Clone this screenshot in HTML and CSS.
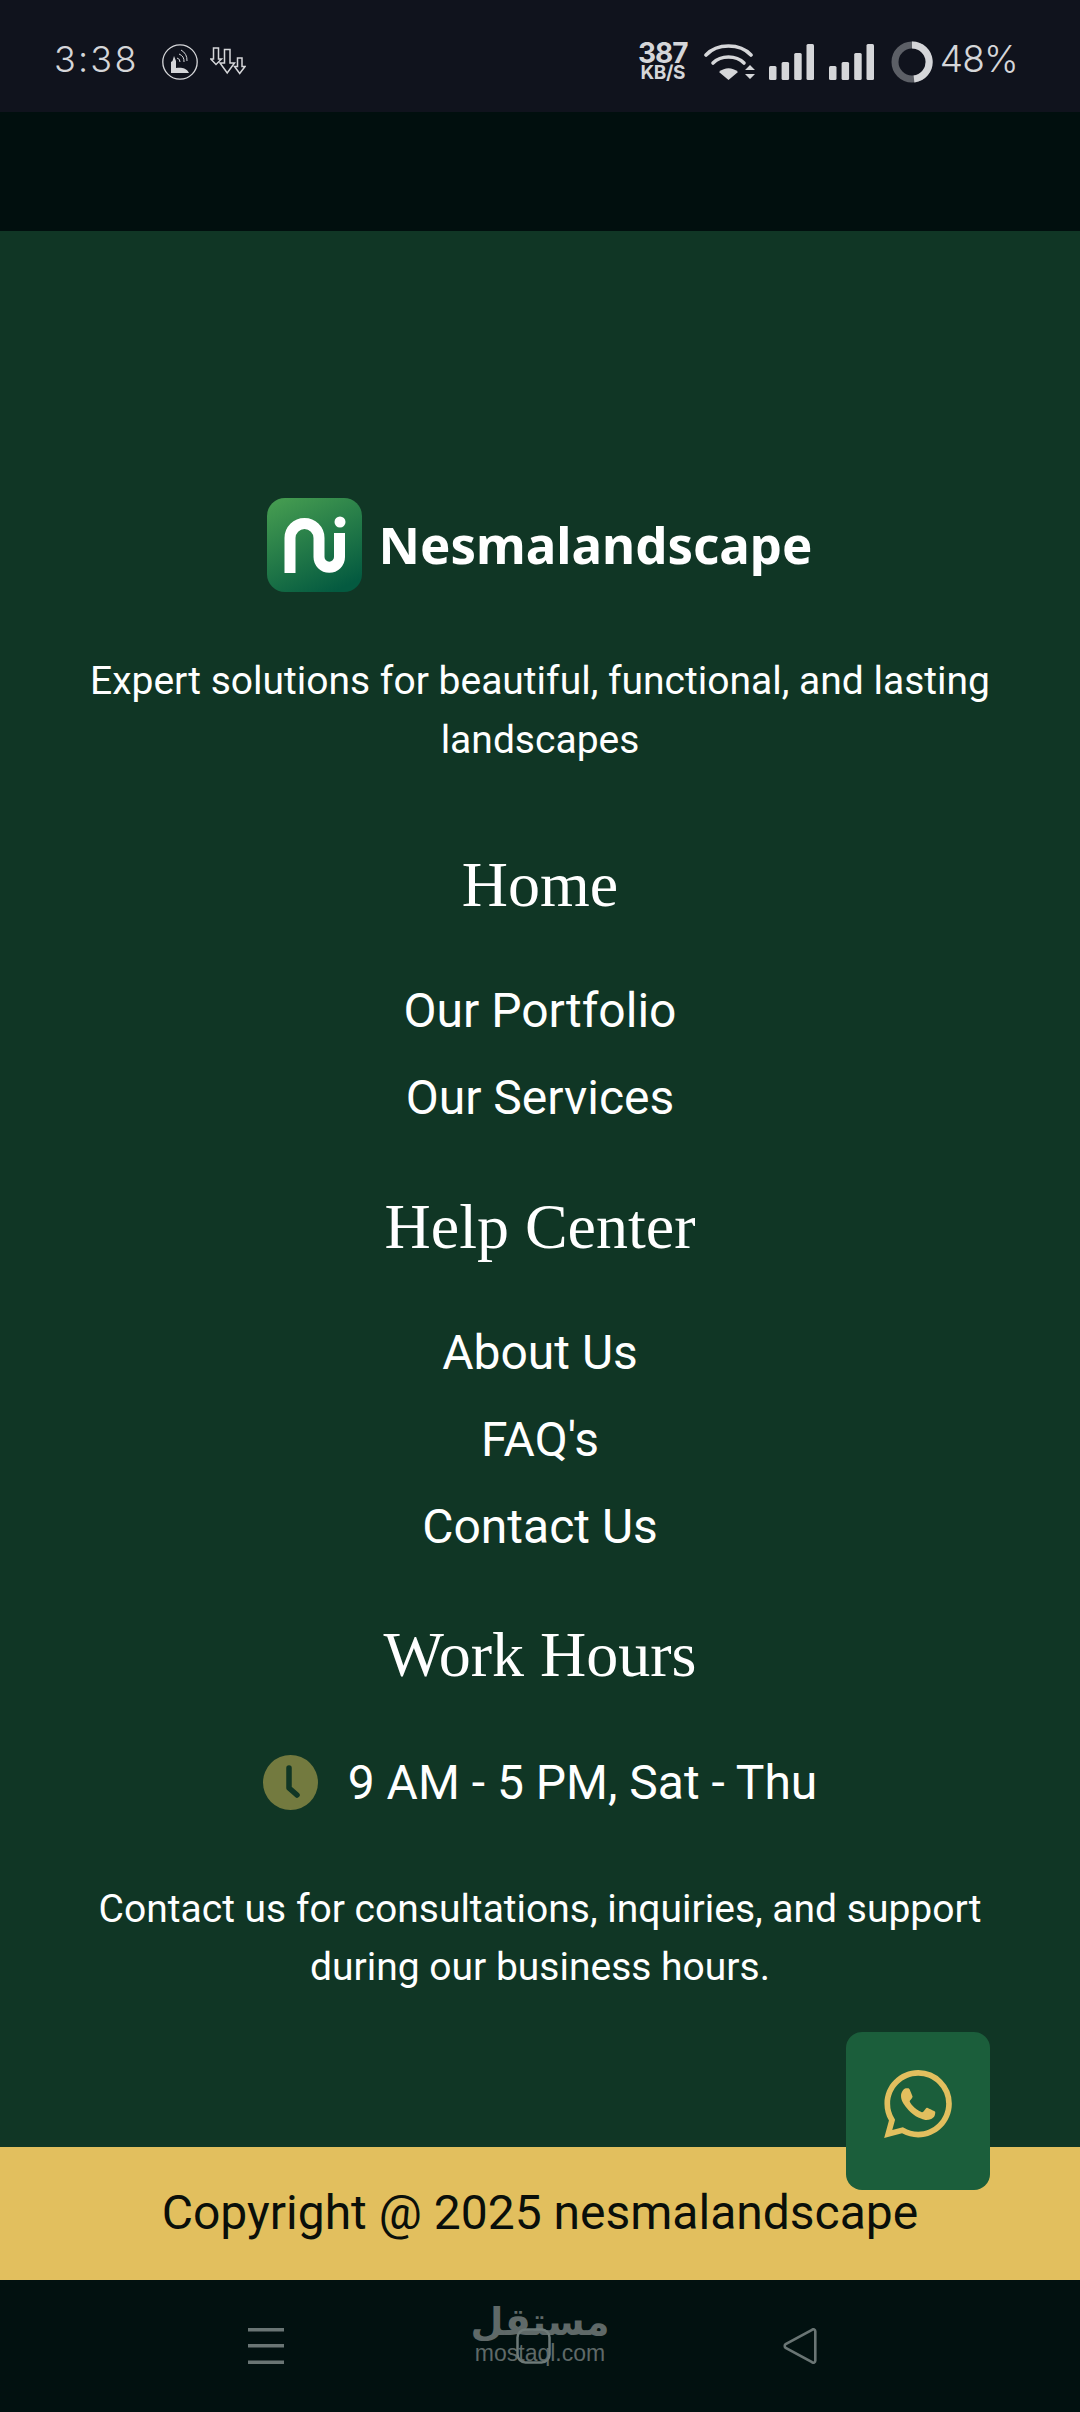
FILE: index.html
```html
<!DOCTYPE html>
<html lang="en">
<head>
<meta charset="utf-8">
<title>Nesmalandscape</title>
<link rel="stylesheet" href="styles.css">
</head>
<body>
<div class="page">
  <div class="status">
    <div class="status-left">
      <span class="time">3:38</span>
      <svg class="ic-hand" viewBox="0 0 36 36"><circle cx="18" cy="18" r="17.200" fill="none" stroke="#d5d6d9" stroke-width="1.300"/><path d="M9 29V18l1.500-1 1.500-5 2 5v7c4-.500 10-1 13 5z" fill="#d5d6d9"/><path d="M15 14a4 4 0 0 1 3 4M17 10a8 8 0 0 1 5 8M19 6a12 12 0 0 1 6 11" fill="none" stroke="#d5d6d9" stroke-width="1"/></svg>
      <svg class="ic-arrows" viewBox="0 0 36 28"><g fill="none" stroke="#d5d6d9" stroke-width="1.500"><path d="M3.500 1h5v11h3l-5.500 5.500L.800 12h2.700z"/><path d="M14.500 2.500h5.500V16h4.500l-7.300 10L10 16h4.500z"/><path d="M27.500 11h4.500v8.500h3L29.700 26.500 24.500 19.500h3z"/></g></svg>
    </div>
    <div class="status-right">
      <div class="speed"><span class="speed-num">387</span><span class="speed-unit">KB/S</span></div>
      <svg class="ic-wifi" viewBox="0 0 51 36"><g fill="none" stroke="#d5d6d9" stroke-width="3.600" stroke-linecap="round"><path d="M2 11C13-1 36-1 47 11"/><path d="M9 19c8-8 23-8 31 0"/></g><path d="M15 28c6-5 13-5 19 0l-9.500 8z" fill="#d5d6d9"/><path d="M46 21l5 5H41zM41 30h10l-5 5z" fill="#d5d6d9"/></svg>
      <svg class="ic-signal" viewBox="0 0 45 36"><g fill="#d5d6d9"><rect x="0" y="22" width="7.500" height="14" rx="1.500"/><rect x="12.600" y="18" width="7.500" height="18" rx="1.500"/><rect x="25.200" y="9" width="7.500" height="27" rx="1.500"/><rect x="37.500" y="0" width="7.500" height="36" rx="1.500"/></g></svg>
      <svg class="ic-signal second" viewBox="0 0 45 36"><g fill="#d5d6d9"><rect x="0" y="22" width="7.500" height="14" rx="1.500"/><rect x="12.600" y="18" width="7.500" height="18" rx="1.500"/><rect x="25.200" y="9" width="7.500" height="27" rx="1.500"/><rect x="37.500" y="0" width="7.500" height="36" rx="1.500"/></g></svg>
      <svg class="ic-batt" viewBox="0 0 42 42"><circle cx="21" cy="21" r="17" fill="none" stroke="#5c5f66" stroke-width="7"/><path d="M21 4a17 17 0 0 1 2 33.900" fill="none" stroke="#d5d6d9" stroke-width="7"/></svg>
      <span class="pct">48%</span>
    </div>
  </div>
  <div class="appbar"></div>
  <footer class="footer">
    <div class="logo">
      <svg class="logo-mark" viewBox="0 0 95 94">
        <defs><linearGradient id="lg" x1="0.200" y1="0" x2="0.700" y2="1"><stop offset="0" stop-color="#439a50"/><stop offset="1" stop-color="#045a40"/></linearGradient></defs>
        <rect width="95" height="94" rx="18" fill="url(#lg)"/>
        <path d="M23 75V40a14.500 14.500 0 0 1 29 0V59a10.250 10.250 0 0 0 20.500 0V35" fill="none" stroke="#fff" stroke-width="11"/>
        <circle cx="73" cy="24" r="5.500" fill="#fff"/>
      </svg>
      <span class="logo-text">Nesmalandscape</span>
    </div>
    <p class="lead">Expert solutions for beautiful, functional, and lasting landscapes</p>
    <h2 class="head first">Home</h2>
    <a class="link">Our Portfolio</a>
    <a class="link">Our Services</a>
    <h2 class="head">Help Center</h2>
    <a class="link">About Us</a>
    <a class="link">FAQ's</a>
    <a class="link">Contact Us</a>
    <h2 class="head">Work Hours</h2>
    <div class="hours">
      <svg class="clock" viewBox="0 0 55 55"><circle cx="27.500" cy="27.500" r="27.500" fill="#737a3f"/><path d="M26 13V33L34 40" fill="none" stroke="#103625" stroke-width="5.500" stroke-linecap="round" stroke-linejoin="round"/></svg>
      <span>9 AM - 5 PM, Sat - Thu</span>
    </div>
    <p class="lead note">Contact us for consultations, inquiries, and support during our business hours.</p>
  </footer>
  <div class="copyright">Copyright @ 2025 nesmalandscape</div>
  <nav class="nav">
    <svg class="nav-menu" viewBox="0 0 36 36"><g fill="#6a7574"><rect y="0" width="36" height="3.500"/><rect y="16" width="36" height="3.500"/><rect y="32.500" width="36" height="3.500"/></g></svg>
    <svg class="nav-home" viewBox="0 0 35 36"><rect x="1.500" y="1.500" width="32" height="33" rx="8" fill="none" stroke="#6e7a78" stroke-width="2.500"/></svg>
    <svg class="nav-back" viewBox="0 0 34 36"><path d="M29 1.800a2 2 0 0 1 3.300 1.500V32.700a2 2 0 0 1-3.300 1.500L2.700 20a2.500 2.500 0 0 1 0-4z" fill="none" stroke="#6a7574" stroke-width="2.600"/></svg>
  </nav>
  <a class="fab"><svg class="wa" viewBox="0 0 24 24"><path fill="#e2bf5e" d="M17.472 14.382c-.297-.149-1.758-.867-2.030-.967-.273-.099-.471-.148-.670.150-.197.297-.767.966-.940 1.164-.173.199-.347.223-.644.075-.297-.150-1.255-.463-2.390-1.475-.883-.788-1.480-1.761-1.653-2.059-.173-.297-.018-.458.130-.606.134-.133.298-.347.446-.520.149-.174.198-.298.298-.497.099-.198.050-.371-.025-.520-.075-.149-.669-1.612-.916-2.207-.242-.579-.487-.500-.669-.510-.173-.008-.371-.010-.570-.010-.198 0-.520.074-.792.372-.272.297-1.040 1.016-1.040 2.479 0 1.462 1.065 2.875 1.213 3.074.149.198 2.096 3.200 5.077 4.487.709.306 1.262.489 1.694.625.712.227 1.360.195 1.871.118.571-.085 1.758-.719 2.006-1.413.248-.694.248-1.289.173-1.413-.074-.124-.272-.198-.570-.347m-5.421 7.403h-.004a9.870 9.870 0 0 1-5.031-1.378l-.361-.214-3.741.982.998-3.648-.235-.374a9.860 9.860 0 0 1-1.510-5.260c.001-5.450 4.436-9.884 9.888-9.884 2.640 0 5.122 1.030 6.988 2.898a9.825 9.825 0 0 1 2.893 6.994c-.003 5.450-4.437 9.884-9.885 9.884m8.413-18.297A11.815 11.815 0 0 0 12.050 0C5.495 0 .160 5.335.157 11.892c0 2.096.547 4.142 1.588 5.945L.057 24l6.305-1.654a11.882 11.882 0 0 0 5.683 1.448h.005c6.554 0 11.890-5.335 11.893-11.893a11.821 11.821 0 0 0-3.480-8.413z"/></svg></a>
  <div class="mark" lang="ar"><span class="mark-ar" dir="rtl">مستقل</span><span class="mark-en">mostaql.com</span></div>
</div>
</body>
</html>
```
FILE: styles.css
```css
* { box-sizing: border-box; }
html, body { margin: 0; padding: 0; }
body { width: 1080px; height: 2412px; overflow: hidden; background: #021110; font-family: Roboto, sans-serif; }
.page { position: relative; width: 1080px; height: 2412px; display: flex; flex-direction: column; }

.status { height: 112px; background: #10131d; color: #d5d6d9; display: flex; justify-content: space-between; align-items: flex-start; padding: 0 62px 0 54px; flex: none; }
.status-left { display: flex; align-items: flex-start; }
.time { font-family: Inter, sans-serif; font-weight: 300; font-size: 36px; line-height: 44px; margin-top: 37px; letter-spacing: 2.200px; }
.ic-hand { width: 36px; height: 36px; margin: 44px 0 0 23px; }
.ic-arrows { width: 36px; height: 28px; margin: 47px 0 0 12px; }
.status-right { display: flex; align-items: flex-start; }
.speed { display: flex; flex-direction: column; align-items: center; font-family: Inter, sans-serif; font-weight: 700; width: 48px; margin-top: 41px; }
.speed-num { font-size: 28px; line-height: 24px; letter-spacing: -1px; }
.speed-unit { font-size: 19px; line-height: 16px; letter-spacing: -0.300px; }
.ic-wifi { width: 51px; height: 36px; margin: 44px 0 0 17px; }
.ic-signal { width: 45px; height: 36px; margin: 44px 0 0 14px; }
.ic-signal.second { margin-left: 15px; }
.ic-batt { width: 42px; height: 42px; margin: 41px 0 0 17px; }
.pct { font-family: Inter, sans-serif; font-weight: 300; font-size: 37px; line-height: 44px; margin: 37px 0 0 7px; letter-spacing: -0.800px; }

.appbar { height: 119px; background: #010f0e; flex: none; }

.footer { height: 1916px; flex: none; background: #103625; color: #fff; display: flex; flex-direction: column; align-items: center; padding-top: 267px; }
.logo { display: flex; align-items: center; height: 94px; gap: 16px; }
.logo-mark { width: 95px; height: 94px; }
.logo-text { font-family: "Noto Sans", sans-serif; font-weight: 700; font-size: 51px; line-height: 94px; margin-top: -3px; }
.lead { margin: 60px 0 0; width: 920px; text-align: center; font-size: 39px; line-height: 58.500px; }
.head { margin: 45px 0 0; font-family: "Liberation Serif", serif; font-weight: 400; font-size: 64px; line-height: 80px; }
.head.first { margin-top: 76px; }
.link { display: block; font-size: 48px; line-height: 87.300px; }
.head + .link { margin-top: 42px; }
.hours { display: flex; align-items: center; gap: 30px; font-size: 48px; line-height: 87px; margin-top: 43.500px; }
.clock { width: 55px; height: 55px; }
.note { margin-top: 54px; }

.copyright { height: 133px; flex: none; background: #e2bf5e; color: #0a0f0a; display: flex; align-items: center; justify-content: center; font-size: 48px; padding-bottom: 2px; }

.nav { height: 132px; flex: none; background: #021110; position: relative; display: flex; align-items: flex-start; }
.nav-menu { width: 36px; height: 36px; margin: 48px 0 0 248px; }
.nav-home { position: relative; z-index: 2; width: 35px; height: 36px; margin: 48px 0 0 232px; }
.nav-back { width: 34px; height: 36px; margin: 48px 0 0 232px; }

.fab { position: absolute; left: 846px; top: 2032px; width: 144px; height: 158px; border-radius: 16px; background: #1b5e3b; display: flex; align-items: center; justify-content: center; padding-bottom: 14px; }
.wa { width: 68px; height: 68px; }

.mark { position: absolute; z-index: 1; left: 470px; top: 2300px; width: 140px; display: flex; flex-direction: column; align-items: center; color: #5f6968; pointer-events: none; }
.mark-ar { font-family: "DejaVu Sans", sans-serif; font-weight: 700; font-size: 38px; line-height: 44px; }
.mark-en { font-family: "Liberation Sans", sans-serif; font-size: 23px; line-height: 18px; }
```
